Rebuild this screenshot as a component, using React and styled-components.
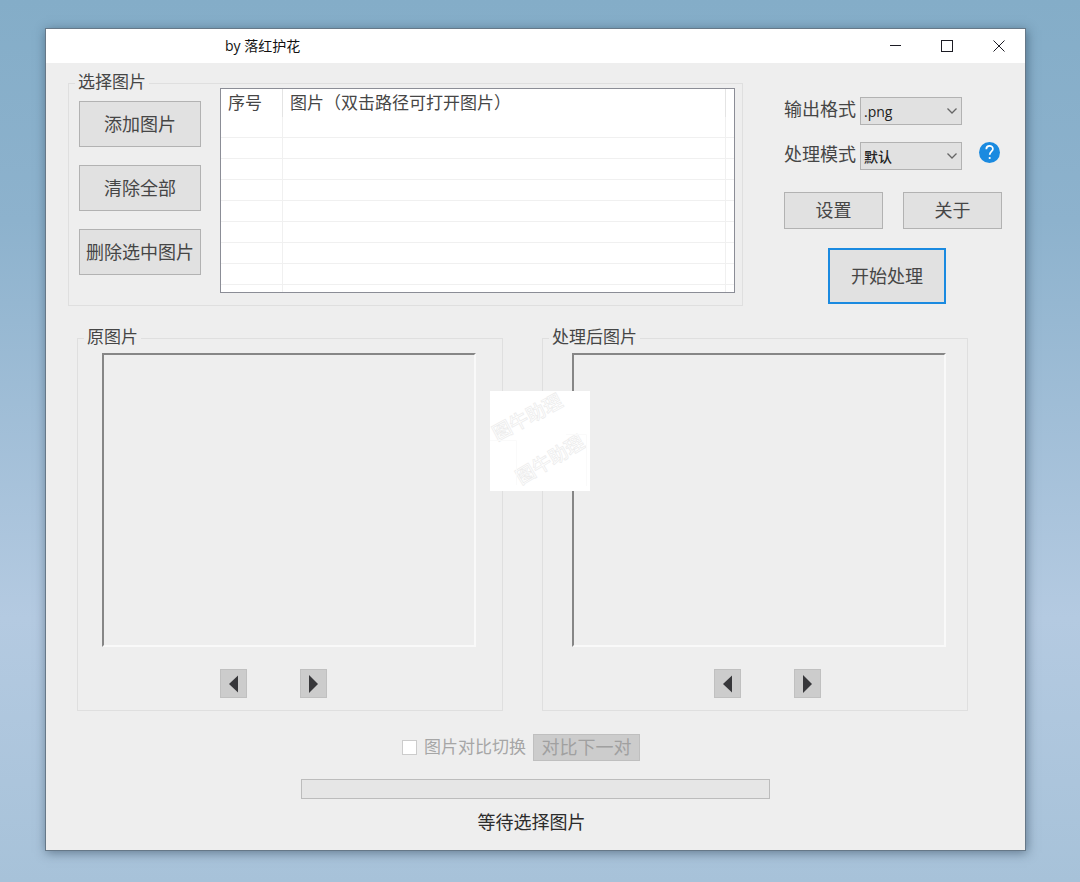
import React, { useState } from 'react';
import styled, { createGlobalStyle } from 'styled-components';

const GlobalStyle = createGlobalStyle`
* {
  box-sizing: border-box;
}
body {
  margin: 0;
  font-family: "Liberation Serif", "Noto Sans CJK SC", serif;
  font-size: 18px;
  color: #464646;
}
button, select, input {
  font: inherit;
  color: inherit;
}
`;

const Desktop = styled.div`
  display: flex;
  flex-direction: column;
  min-height: 100vh;
  padding: 28px 54px 31px 45px;
  background: linear-gradient(#84adc8 0%, #8db2cd 25%, #b4cae1 70%, #a7c2d9 100%);
`;

const Window = styled.main`
  flex: 1;
  border: 1px solid #667888;
  background: #eeeeee;
  box-shadow: 1px 2px 10px rgba(30, 50, 70, 0.5);
`;

const TitleBar = styled.header`
  display: flex;
  align-items: center;
  height: 34px;
  padding-left: 179px;
  background: white;
`;

const Title = styled.h1`
  flex: 1;
  margin: 0;
  font-family: "Open Sans", "Noto Sans CJK SC", sans-serif;
  font-size: 14px;
  font-weight: 400;
  line-height: 18px;
  color: #111;
`;

const TitleButton = styled.button`
  display: flex;
  align-items: center;
  justify-content: center;
  width: 52px;
  height: 34px;
  padding: 0;
  border: 0;
  background: none;
  color: #1c1c24;
`;

const TopRow = styled.div`
  display: flex;
  gap: 41px;
  padding: 15px 23px 27px 22px;
`;

const Group = styled.fieldset`
  flex: 1;
  min-width: 0;
  margin: 0;
  padding: ${props => props.$padding};
  border: 1px solid #dfdfdf;
`;

const GroupTitle = styled.legend`
  height: 10px;
  margin-left: ${props => props.$indent || '-4px'};
  padding: 0 3px;
  font-size: 17px;
  line-height: 10px;
`;

const Picker = styled.div`
  display: flex;
  align-items: flex-start;
  gap: 19px;
`;

const PickerButtons = styled.div`
  display: flex;
  flex-direction: column;
  gap: 18px;
  padding-top: 13px;
`;

const Button = styled.button`
  width: ${props => props.$width};
  height: ${props => props.$height};
  padding: 1px 0 0;
  border: ${props => (props.$primary ? '2px solid #1a8ae0' : '1px solid #b2b2b2')};
  background: #e1e1e1;
  line-height: 24px;
  white-space: nowrap;

  &:disabled {
    background: #cccccc;
    border-color: #bfbfbf;
    color: #a0a0a0;
  }
`;

const ListBox = styled.div`
  flex: 1;
  height: 205px;
  overflow: hidden;
  border: 1px solid #8b8d96;
  background: white;
`;

const List = styled.table`
  width: 100%;
  table-layout: fixed;
  border-collapse: separate;
  border-spacing: 0;
  font-size: 17px;
`;

const HeadCell = styled.th`
  height: 28px;
  padding: 2px 0 0 7px;
  border-right: ${props => (props.$last ? '0' : '1px solid #e4e4e4')};
  font-weight: 400;
  line-height: 24px;
  text-align: left;
  white-space: nowrap;
`;

const Cell = styled.td`
  height: 21px;
  padding: 0;
  border-right: ${props => (props.$last ? '0' : '1px solid #f0f0f0')};
  border-bottom: 1px solid #f0f0f0;
`;

const Options = styled.div`
  display: flex;
  flex-direction: column;
  width: 218px;
  padding-top: 19px;
`;

const OptionRow = styled.div`
  display: flex;
  align-items: flex-start;
  margin-bottom: 17px;
`;

const OptionLabel = styled.label`
  width: 76px;
  line-height: 26px;
`;

const SelectBox = styled.div`
  display: grid;
  align-items: center;
  width: 102px;
  margin-right: 17px;

  > * {
    grid-area: 1 / 1;
  }

  > svg {
    justify-self: end;
    margin-right: 4px;
    pointer-events: none;
  }
`;

const Select = styled.select`
  appearance: none;
  width: 100%;
  height: 28px;
  padding: 0 22px 0 3px;
  border: 1px solid #b2b2b2;
  border-radius: 0;
  background: #e1e1e1;
  font-family: "Open Sans", "Noto Sans CJK SC", sans-serif;
  font-size: 14px;
  font-weight: 500;
  color: #222;
`;

const HelpButton = styled.button`
  display: flex;
  padding: 0;
  border: 0;
  background: none;
`;

const ButtonPair = styled.div`
  display: flex;
  justify-content: space-between;
  margin: 5px 0 19px;
`;

const StartRow = styled.div`
  padding-left: 44px;
`;

const Previews = styled.div`
  display: flex;
  gap: 39px;
  padding: 0 57px 22px 31px;
`;

const Preview = styled.div`
  height: 294px;
  margin-top: 10px;
  border: 2px solid;
  border-color: #868686 #f9f9f9 #f9f9f9 #868686;
`;

const Pager = styled.div`
  display: flex;
  gap: 53px;
  padding: 22px 0 0 ${props => props.$indent};
`;

const PagerButton = styled.button`
  display: flex;
  align-items: center;
  justify-content: center;
  width: 27px;
  height: 29px;
  padding: 0;
  border: 1px solid #c0c0c0;
  background: #cccccc;
`;

const PreviewArea = styled.section`
  position: relative;
`;

const Stamp = styled.svg`
  position: absolute;
  top: 58px;
  left: 444px;
  width: 100px;
  height: 100px;
  background: white;
`;

const Footer = styled.footer`
  display: flex;
  flex-direction: column;
  align-items: center;
  padding-top: 1px;
`;

const CompareRow = styled.div`
  display: flex;
  align-items: center;
  padding-right: 29px;
`;

const CompareLabel = styled.label`
  display: flex;
  align-items: center;
  gap: 7px;
  margin-right: 7px;
  font-size: 17px;
  line-height: 24px;
  color: #a6a6a6;
`;

const CheckBox = styled.input`
  appearance: none;
  width: 15px;
  height: 15px;
  margin: 0;
  border: 1px solid #cccccc;
  background: white;
`;

const Progress = styled.progress`
  appearance: none;
  width: 48%;
  height: 20px;
  margin: 18px 0 12px;
  border: 1px solid #bcbcbc;
  background: #e6e6e6;

  &::-webkit-progress-bar {
    background: #e6e6e6;
  }

  &::-webkit-progress-value {
    background: #06b025;
  }
`;

const Status = styled.p`
  margin: 0;
  padding-right: 8px;
  line-height: 24px;
  color: #2c2c2c;
`;

const rows = [1, 2, 3, 4, 5, 6, 7, 8, 9];

function Chevron() {
  return (
    <svg width="12" height="8" viewBox="0 0 12 8" fill="none" stroke="#666" strokeWidth="1.3">
      <path d="M1.5 1.5 L6 6 L10.5 1.5" />
    </svg>
  );
}

function Option({ id, label, values, children }) {
  const [value, setValue] = useState(values[0]);

  return (
    <OptionRow>
      <OptionLabel htmlFor={id}>{label}</OptionLabel>
      <SelectBox>
        <Select id={id} value={value} onChange={e => setValue(e.target.value)}>
          {values.map(v => <option key={v}>{v}</option>)}
        </Select>
        <Chevron />
      </SelectBox>
      {children}
    </OptionRow>
  );
}

function PreviewGroup({ title, padding, indent, pagerIndent }) {
  return (
    <Group $padding={padding}>
      <GroupTitle $indent={indent}>{title}</GroupTitle>
      <Preview />
      <Pager $indent={pagerIndent}>
        <PagerButton type="button" aria-label="上一张">
          <svg width="9" height="18" viewBox="0 0 9 18"><path d="M9 0.5 V17.5 L0 9 Z" fill="#37373a" /></svg>
        </PagerButton>
        <PagerButton type="button" aria-label="下一张">
          <svg width="9" height="18" viewBox="0 0 9 18"><path d="M0 0 V18 L9 9 Z" fill="#37373a" /></svg>
        </PagerButton>
      </Pager>
    </Group>
  );
}

function Watermark() {
  return (
    <Stamp viewBox="0 0 100 100" aria-hidden="true">
      <g fill="none" stroke="#ececec" strokeWidth="0.7" fontSize="19" fontWeight="500" fontFamily="Noto Sans CJK SC, sans-serif">
        <text transform="translate(7 50) rotate(-28)">图牛助理</text>
        <text transform="translate(31 94) rotate(-31)">图牛助理</text>
      </g>
      <path d="M0 49.5 H26.5 V94 M76 43.5 H96.5 V95" fill="none" stroke="#fafafa" />
    </Stamp>
  );
}

function App() {
  return (
    <>
      <GlobalStyle />
      <Desktop>
        <Window>
          <TitleBar>
            <Title>by 落红护花</Title>
            <TitleButton type="button" aria-label="最小化">
              <svg width="12" height="12" viewBox="0 0 12 12"><path d="M1 5.5 H12" stroke="currentColor" /></svg>
            </TitleButton>
            <TitleButton type="button" aria-label="最大化">
              <svg width="12" height="12" viewBox="0 0 12 12"><rect x="0.5" y="0.5" width="11" height="11" fill="none" stroke="currentColor" /></svg>
            </TitleButton>
            <TitleButton type="button" aria-label="关闭">
              <svg width="12" height="12" viewBox="0 0 12 12"><path d="M0.5 0.5 L11.5 11.5 M11.5 0.5 L0.5 11.5" stroke="currentColor" /></svg>
            </TitleButton>
          </TitleBar>

          <TopRow>
            <Group $padding="0 7px 12px 10px">
              <GroupTitle>选择图片</GroupTitle>
              <Picker>
                <PickerButtons>
                  <Button type="button" $width="122px" $height="46px">添加图片</Button>
                  <Button type="button" $width="122px" $height="46px">清除全部</Button>
                  <Button type="button" $width="122px" $height="46px">删除选中图片</Button>
                </PickerButtons>
                <ListBox>
                  <List>
                    <colgroup>
                      <col width="62" />
                      <col />
                      <col width="8" />
                    </colgroup>
                    <thead>
                      <tr>
                        <HeadCell>序号</HeadCell>
                        <HeadCell>图片（双击路径可打开图片）</HeadCell>
                        <HeadCell $last />
                      </tr>
                    </thead>
                    <tbody>
                      {rows.map(row => (
                        <tr key={row}>
                          <Cell />
                          <Cell />
                          <Cell $last />
                        </tr>
                      ))}
                    </tbody>
                  </List>
                </ListBox>
              </Picker>
            </Group>

            <Options>
              <Option id="format" label="输出格式" values={['.png', '.jpg', '.webp']} />
              <Option id="mode" label="处理模式" values={['默认']}>
                <HelpButton type="button" aria-label="帮助">
                  <svg width="21" height="21" viewBox="0 0 21 21">
                    <circle cx="10.5" cy="10.5" r="10.5" fill="#1a8ae0" />
                    <path d="M7.3 7.2 C7.3 2.8 13.9 2.9 13.9 6.9 C13.9 9.4 10.7 9.5 10.7 12.8" fill="none" stroke="white" strokeWidth="1.7" />
                    <circle cx="10.7" cy="16" r="1.1" fill="white" />
                  </svg>
                </HelpButton>
              </Option>
              <ButtonPair>
                <Button type="button" $width="99px" $height="37px">设置</Button>
                <Button type="button" $width="99px" $height="37px">关于</Button>
              </ButtonPair>
              <StartRow>
                <Button type="button" $primary $width="118px" $height="56px">开始处理</Button>
              </StartRow>
            </Options>
          </TopRow>

          <PreviewArea>
            <Previews>
              <PreviewGroup title="原图片" padding="0 26px 12px 24px" indent="-18px" pagerIndent="118px" />
              <PreviewGroup title="处理后图片" padding="0 21px 12px 29px" indent="-23px" pagerIndent="142px" />
            </Previews>
            <Watermark />
          </PreviewArea>

          <Footer>
            <CompareRow>
              <CompareLabel>
                <CheckBox type="checkbox" disabled />
                图片对比切换
              </CompareLabel>
              <Button type="button" disabled $width="107px" $height="27px">对比下一对</Button>
            </CompareRow>
            <Progress value="0" max="100" aria-label="处理进度" />
            <Status>等待选择图片</Status>
          </Footer>
        </Window>
      </Desktop>
    </>
  );
}

export default App;
